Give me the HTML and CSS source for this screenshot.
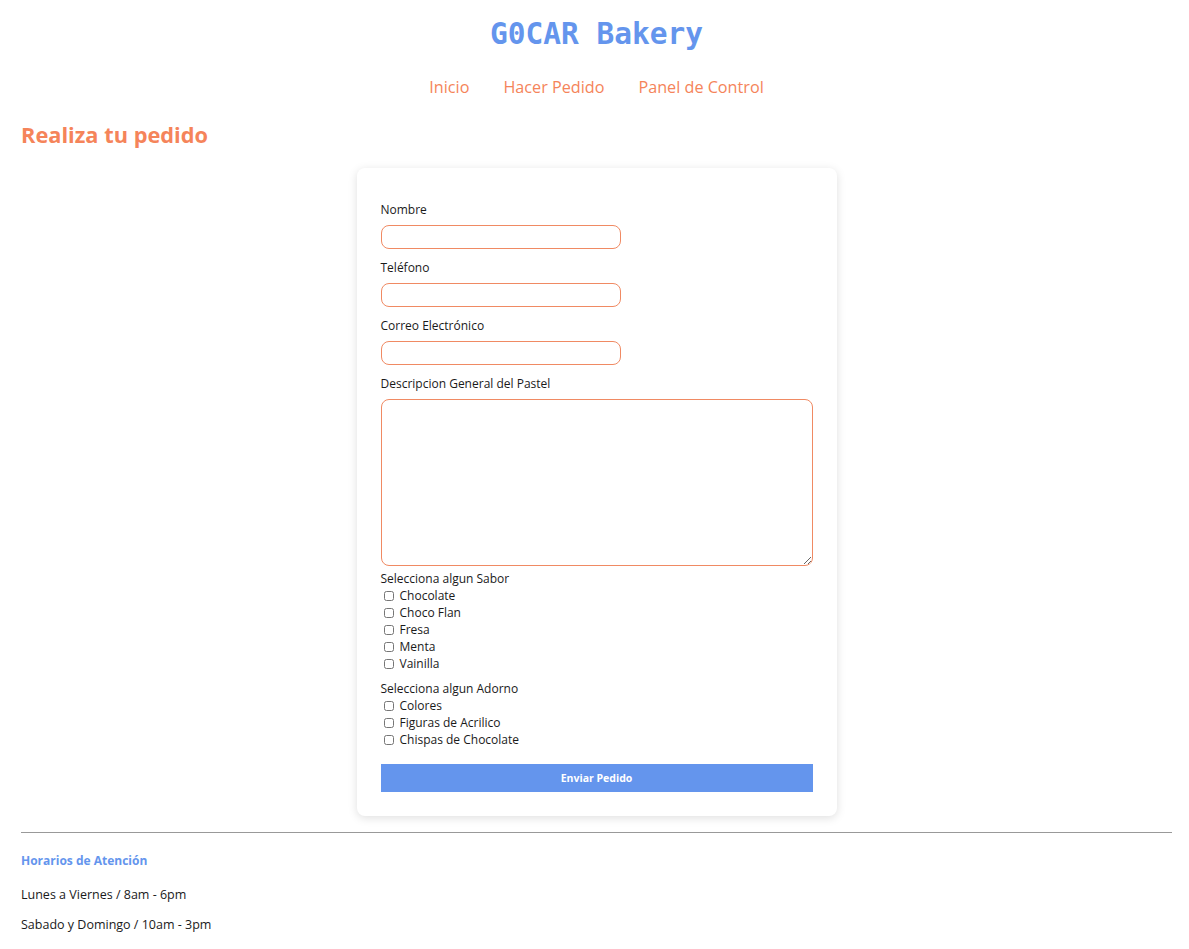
FILE: index.html
```html
<!DOCTYPE html>
<html lang="es">
<head>
<meta charset="utf-8">
<title>G0CAR Bakery</title>
<link rel="stylesheet" href="styles.css">
</head>
<body>
<header class="site-header">
  <h1 class="brand">G0CAR Bakery</h1>
  <nav class="nav">
    <a href="#">Inicio</a>
    <a href="#">Hacer Pedido</a>
    <a href="#">Panel de Control</a>
  </nav>
</header>
<main>
  <h2 class="page-title">Realiza tu pedido</h2>
  <form class="card">
    <label class="field-label" for="nombre">Nombre</label>
    <input class="text-input" id="nombre" type="text">
    <label class="field-label" for="tel">Teléfono</label>
    <input class="text-input" id="tel" type="text">
    <label class="field-label" for="mail">Correo Electrónico</label>
    <input class="text-input" id="mail" type="text">
    <label class="field-label" for="desc">Descripcion General del Pastel</label>
    <textarea class="text-area" id="desc"></textarea>
    <div class="group">
      <div class="group-title">Selecciona algun Sabor</div>
      <label class="check"><input type="checkbox"> Chocolate</label>
      <label class="check"><input type="checkbox"> Choco Flan</label>
      <label class="check"><input type="checkbox"> Fresa</label>
      <label class="check"><input type="checkbox"> Menta</label>
      <label class="check"><input type="checkbox"> Vainilla</label>
    </div>
    <div class="group group-2">
      <div class="group-title">Selecciona algun Adorno</div>
      <label class="check"><input type="checkbox"> Colores</label>
      <label class="check"><input type="checkbox"> Figuras de Acrilico</label>
      <label class="check"><input type="checkbox"> Chispas de Chocolate</label>
    </div>
    <button class="submit" type="button">Enviar Pedido</button>
  </form>
</main>
<footer class="footer">
  <hr class="rule">
  <h4 class="footer-title">Horarios de Atención</h4>
  <p class="footer-text">Lunes a Viernes / 8am - 6pm</p>
  <p class="footer-text">Sabado y Domingo / 10am - 3pm</p>
</footer>
</body>
</html>
```
FILE: styles.css
```css
html, body {
  margin: 0;
  padding: 0;
  background: #ffffff;
}
body {
  padding: 0 17px 0 21px;
  font-family: "Open Sans", "Noto Sans", sans-serif;
  color: #1a1a1a;
  font-size: 12px;
}
.site-header {
  display: flex;
  flex-direction: column;
  align-items: center;
}
.brand {
  margin: 15px 0 0;
  font-family: "DejaVu Sans Mono", "Liberation Mono", monospace;
  font-size: 29.5px;
  line-height: 38px;
  font-weight: bold;
  color: #6495ed;
}
.nav {
  display: flex;
  gap: 34px;
  margin-top: 22px;
}
.nav a {
  color: #f5845a;
  text-decoration: none;
  font-size: 16.2px;
  line-height: 24px;
}
.page-title {
  margin: 22px 0 19px;
  font-size: 21.8px;
  line-height: 28px;
  font-weight: bold;
  color: #f5845a;
}
.card {
  width: 432px;
  margin: 0 auto;
  padding: 33px 24px 24px;
  background: #fff;
  border-radius: 8px;
  box-shadow: 0 2px 10px rgba(0, 0, 0, 0.13);
  display: flex;
  flex-direction: column;
  align-items: flex-start;
}
.field-label {
  font-size: 12px;
  line-height: 17px;
  margin-bottom: 7px;
}
.text-input {
  width: 240px;
  height: 24px;
  box-sizing: border-box;
  border: 1px solid #f08a63;
  border-radius: 8px;
  margin: 0 0 10px;
  padding: 2px 8px;
  outline: none;
}
.text-area {
  width: 432px;
  height: 167px;
  box-sizing: border-box;
  border: 1px solid #f08a63;
  border-radius: 8px;
  margin: 0 0 4px;
  padding: 4px;
  resize: vertical;
}
.group {
  display: flex;
  flex-direction: column;
  font-size: 12px;
  line-height: 17px;
}
.group-2 {
  margin-top: 8px;
}
.check {
  display: flex;
  align-items: center;
  height: 17px;
}
.check input {
  margin: 0 6px 0 3px;
  width: 10px;
  height: 10px;
}
.submit {
  align-self: stretch;
  margin-top: 16px;
  height: 28px;
  border: none;
  background: #6495ed;
  color: #fff;
  font-family: "Open Sans", "Noto Sans", sans-serif;
  font-weight: bold;
  font-size: 10.5px;
}
.footer {
  margin-top: 16px;
}
.rule {
  margin: 0;
  border: none;
  border-top: 1px solid #999;
}
.footer-title {
  margin: 20px 0 0;
  font-size: 12px;
  line-height: 16px;
  color: #6495ed;
  font-weight: bold;
}
.footer-text {
  margin: 18px 0 0;
  font-size: 12.5px;
  line-height: 16px;
}
.footer-text + .footer-text {
  margin-top: 14px;
}
```
